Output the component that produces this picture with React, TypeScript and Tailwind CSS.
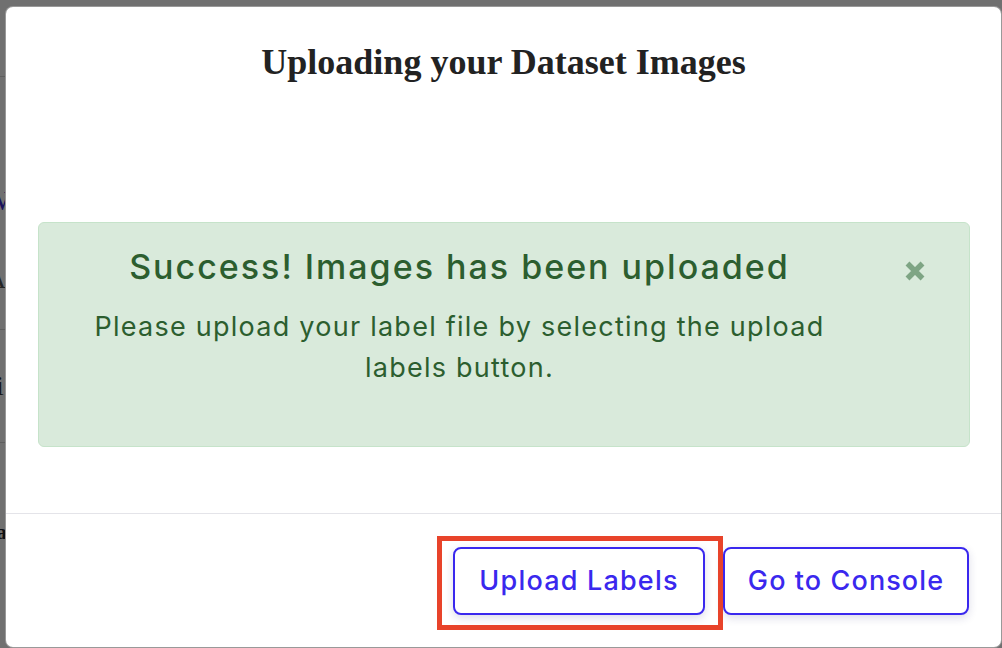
import React from 'react';

const sans = "font-['Inter',sans-serif]";

function BackgroundPage() {
  // only a thin strip of the page behind the modal is visible at the left edge
  return (
    <div className="flex w-[40px] flex-col font-['Liberation_Serif',serif] text-[28px] leading-none">
      <div className="h-[77px] border-b border-[#d6d6d6]" />
      <div className="h-[253px] border-b border-[#d6d6d6] pt-[110px]">
        <div className="-ml-[16px] text-[#3b2bd0]">W</div>
        <div className="-ml-[14px] mt-[50px] text-[#555]">A</div>
      </div>
      <div className="h-[113px] border-b border-[#d6d6d6] pt-[42px]">
        <div className="-ml-[4px] text-[#333]">i</div>
      </div>
      <div className="pt-[78px]">
        <div className="-ml-[10px] text-[22px] font-bold text-[#1f2430]">la</div>
      </div>
    </div>
  );
}

function CloseIcon() {
  return (
    <svg width="22" height="22" viewBox="0 0 22 22" aria-hidden="true">
      <path d="M3.5 3.5 L18.5 18.5 M18.5 3.5 L3.5 18.5" stroke="#7ea584" strokeWidth="5.5" strokeLinecap="butt" />
    </svg>
  );
}

export default function App() {
  return (
    <div className="relative h-[648px] w-[1002px] overflow-hidden bg-white">
      <BackgroundPage />

      <div className="absolute inset-0 bg-black/[0.56]">
        <div className="ml-[5px] mt-[6px] flex h-[642px] w-[997px] flex-col rounded-[8px] border border-black/40 bg-white">
          <h4 className="pt-[36px] text-center font-['Liberation_Serif',serif] text-[36px] font-bold leading-[38px] text-[#222]">
            Uploading your Dataset Images
          </h4>

          <div className={`ml-[32px] mt-[141px] flex h-[225px] w-[932px] rounded-[6px] border border-[#c6e3ca] bg-[#d9eadb] text-[#2c5e2f] ${sans}`}>
            <div className="flex-1 pl-[20px] pt-[24px] text-center">
              <div className="text-[34px] font-medium leading-[40px] tracking-[2px]">
                Success! Images has been uploaded
              </div>
              <p className="mt-[19px] text-[27px] leading-[41px] tracking-[1.25px]">
                Please upload your label file by selecting the upload
                <br />
                labels button.
              </p>
            </div>
            <div className="flex w-[109px] justify-center pt-[37px]">
              <CloseIcon />
            </div>
          </div>

          <div className={`mt-[66px] flex justify-end gap-[18px] border-t border-[#e4e4e9] pr-[32px] pt-[33px] ${sans}`}>
            <button className="h-[68px] w-[252px] rounded-[8px] border-2 border-[#3a28ee] bg-white text-[27px] font-medium tracking-[1.2px] text-[#3a28ee] shadow-[0_3px_8px_rgba(40,40,110,0.16)]">
              Upload Labels
            </button>
            <button className="h-[68px] w-[246px] rounded-[8px] border-2 border-[#3a28ee] bg-white text-[27px] font-medium tracking-[1.1px] text-[#3a28ee] shadow-[0_3px_8px_rgba(40,40,110,0.16)]">
              Go to Console
            </button>
          </div>
        </div>
      </div>

      {/* annotation box around the upload button */}
      <div className="pointer-events-none absolute left-[437px] top-[536px] h-[94px] w-[286px] border-[5px] border-[#e8432a]" />
    </div>
  );
}
